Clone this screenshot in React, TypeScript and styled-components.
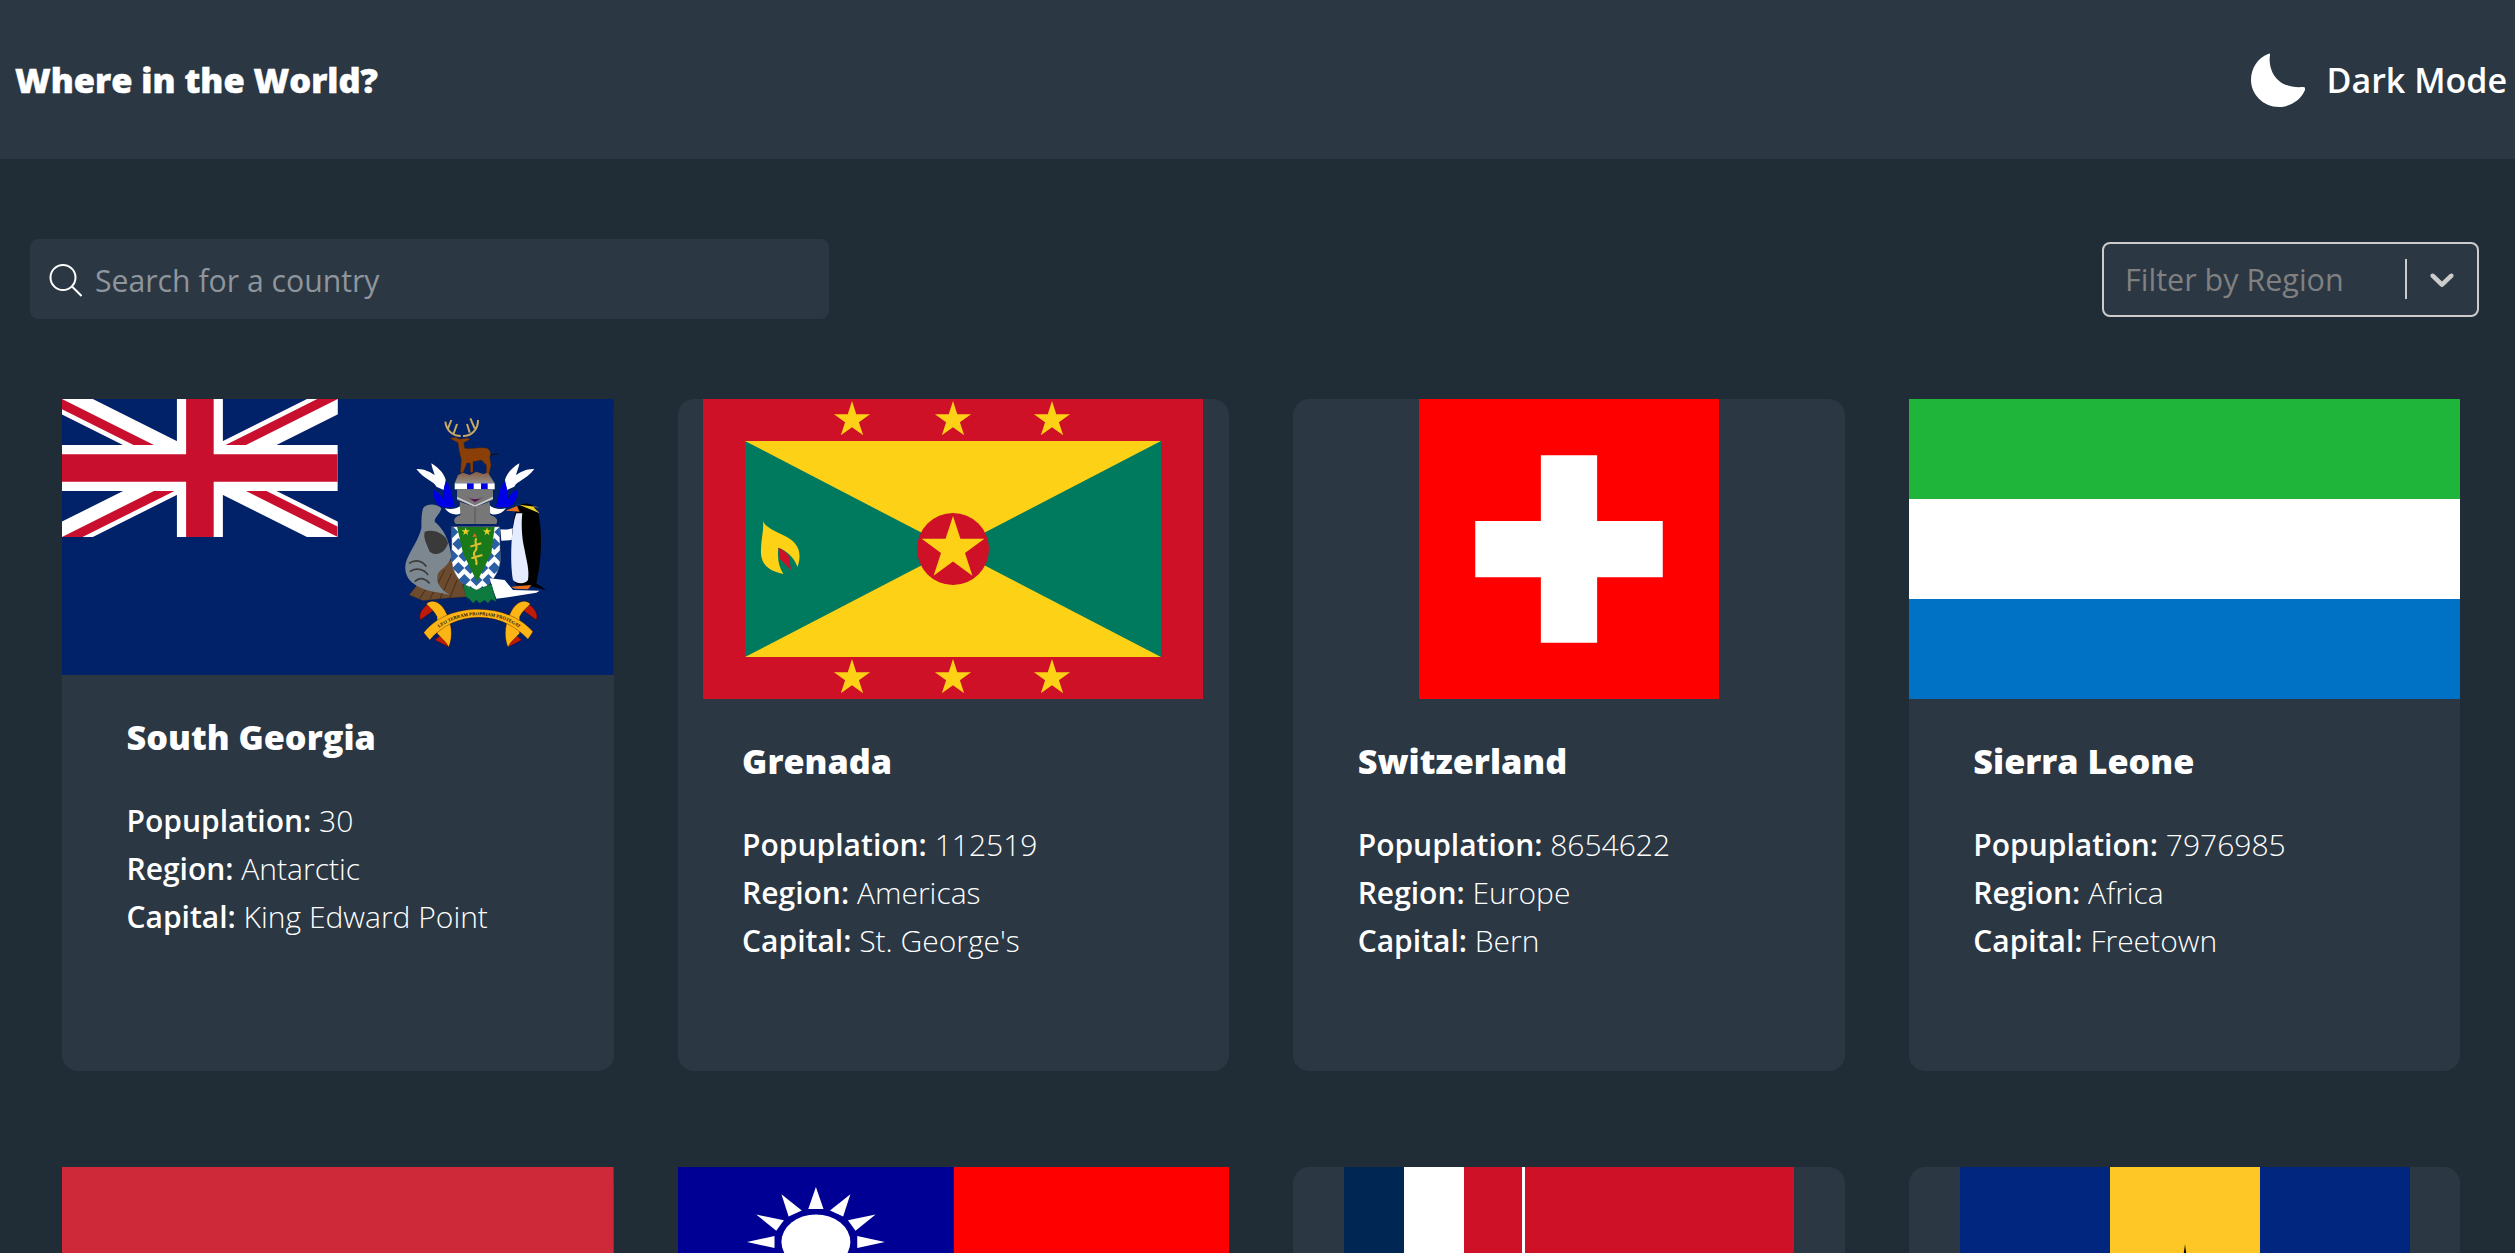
import styled, { createGlobalStyle } from 'styled-components';

const WIDE_FLAG = 551.6;

const GlobalStyle = createGlobalStyle`
  html, body {
    margin: 0;
    padding: 0;
    height: 100%;
    overflow: hidden;
    background-color: #202c36;
  }
  * {
    box-sizing: border-box;
  }
`;

const Page = styled.div`
  height: 100vh;
  overflow: hidden;
  color: #fff;
  font-family: 'Open Sans', 'Noto Sans', sans-serif;
`;

const Header = styled.header`
  height: 159px;
  padding: 0 8px 0 15px;
  display: flex;
  align-items: center;
  justify-content: space-between;
  background-color: #2b3743;
`;

const Title = styled.h1`
  margin: 0;
  font-size: 34.4px;
  font-weight: 800;
  -webkit-text-stroke: 0.5px #fff;
`;

const ModeToggle = styled.div`
  display: flex;
  align-items: center;
  gap: 22px;
  font-size: 34px;
  font-weight: 600;
`;

const Toolbar = styled.div`
  padding: 80px 36px 80px 30px;
  display: flex;
  align-items: center;
  justify-content: space-between;
`;

const SearchBox = styled.label`
  width: 799px;
  height: 80px;
  padding: 2px 19px 0;
  display: flex;
  align-items: center;
  gap: 13px;
  background-color: #2b3743;
  border-radius: 8px;
`;

const SearchInput = styled.input`
  flex: 1;
  border: 0;
  outline: 0;
  padding: 0;
  background: transparent;
  color: #fff;
  font-family: inherit;
  font-size: 30.2px;
  font-weight: 400;

  &::placeholder {
    color: #8f959b;
    opacity: 1;
  }
`;

const FilterBox = styled.div`
  width: 377px;
  height: 75px;
  padding-left: 21px;
  display: flex;
  align-items: center;
  background-color: #2b3743;
  border: 2px solid #ccc;
  border-radius: 8px;
`;

const FilterLabel = styled.span`
  flex: 1;
  color: #808080;
  font-size: 30.5px;
`;

const FilterDivider = styled.span`
  width: 2px;
  height: 40px;
  background-color: #ccc;
`;

const FilterArrow = styled.span`
  width: 70px;
  display: flex;
  align-items: center;
  justify-content: center;
  color: #ccc;
`;

const Grid = styled.main`
  padding: 0 0 0 62px;
  display: grid;
  grid-template-columns: repeat(4, ${WIDE_FLAG}px);
  column-gap: 64px;
  row-gap: 96px;
`;

const Card = styled.article`
  height: 672px;
  background-color: #2b3743;
  border-radius: 16px;
`;

const FlagFrame = styled.div`
  display: flex;
  justify-content: center;
`;

const FlagSvg = styled.svg<{ $width: number; $height: number }>`
  display: block;
  width: ${(props) => props.$width}px;
  height: ${(props) => props.$height}px;
`;

const CardBody = styled.div`
  padding: 38px 40px 0 64.5px;
`;

const CountryName = styled.h2`
  margin: 0 0 36px;
  font-size: 34.2px;
  line-height: 48px;
  font-weight: 800;
`;

const Fact = styled.p`
  margin: 0;
  font-size: 30px;
  line-height: 48px;
  font-weight: 300;
`;

const FactLabel = styled.span`
  font-weight: 600;
`;

function star(cx: number, cy: number, r: number) {
  const points = [];
  for (let i = 0; i < 10; i++) {
    const radius = i % 2 === 0 ? r : r * 0.382;
    const angle = (Math.PI / 5) * i - Math.PI / 2;
    points.push(`${cx + radius * Math.cos(angle)},${cy + radius * Math.sin(angle)}`);
  }
  return points.join(' ');
}

function SouthGeorgiaCrest() {
  const lozenges = [];
  for (let row = 0; row < 6; row++) {
    for (let col = 0; col < 5; col++) {
      const x = 218 + col * 36 + (row % 2) * 18;
      const y = 396 + row * 36;
      lozenges.push(`M${x} ${y - 18}L${x + 18} ${y}L${x} ${y + 18}L${x - 18} ${y}Z`);
    }
  }

  return (
    <g transform="translate(318 1) scale(0.3333)">
      <defs>
        <linearGradient id="rock" x1="0" y1="0" x2="0" y2="1">
          <stop offset="0" stopColor="#8a5a3c" />
          <stop offset="1" stopColor="#8f8f8f" />
        </linearGradient>
        <clipPath id="shieldClip">
          <path d="M216 380L360 380L362 480C360 530 320 560 290 590C255 560 218 530 216 480Z" />
        </clipPath>
      </defs>

      <path
        d="M243 108C222 108 200 95 197 65M205 85L215 60M222 100L232 72M250 108C275 108 295 90 295 60M285 85L272 55M270 98L262 72"
        fill="none"
        stroke="#c8a961"
        strokeWidth="6"
      />
      <path d="M330 165L356 162" stroke="#111" strokeWidth="3" />
      <path
        d="M210 115L228 112L240 118L262 114L272 118L252 128L255 145C275 148 305 140 322 145C332 150 335 160 330 172L334 195L328 222L320 222L320 195L305 180L280 185L280 215L272 218L272 190L262 188L250 218L242 218L245 180L238 150L235 128Z"
        fill="#8a3f06"
        stroke="#4a2000"
      />
      <path d="M225 250L235 225L250 218L270 225L290 215L310 222L325 218L345 250Z" fill="url(#rock)" />

      {[0, 1].map((side) => (
        <g key={side} transform={side ? 'translate(574 0) scale(-1 1)' : undefined}>
          <path
            d="M110 207C130 205 150 215 165 225C158 205 155 195 155 190C180 205 195 225 198 240L192 270L170 260C165 245 135 240 110 207Z"
            fill="#fff"
          />
          <path
            d="M200 245C215 260 215 285 222 305L225 320L190 322C170 318 158 290 162 270C175 275 185 285 188 298C192 280 190 260 200 245Z"
            fill="#0000e6"
          />
          <path d="M195 325C215 330 235 325 245 315L248 335C235 350 210 345 195 325Z" fill="#fff" />
        </g>
      ))}

      <rect x="225" y="250" width="120" height="18" fill="#fff" />
      <rect x="262" y="250" width="20" height="18" fill="#0000e6" />
      <rect x="304" y="250" width="20" height="18" fill="#0000e6" />
      <path d="M232 268L340 268L340 300L286 318L232 300Z" fill="#777" />
      <path d="M262 290Q286 305 312 290L286 306Z" fill="#5a0a50" />
      <path d="M232 290L286 316L340 290L340 296L286 322L232 296Z" fill="#ccc" />
      <path
        d="M240 305L286 320L330 305L332 345C345 350 358 355 350 372L228 372C218 360 225 350 242 345Z"
        fill="#777"
      />
      <path d="M286 320L286 372" stroke="#444" strokeWidth="2" />

      <path d="M88 585L140 520L215 480L265 590L200 595L130 602Z" fill="#6b4a2e" stroke="#2e2013" />
      <path
        d="M120 595L170 520M150 598L195 510M180 598L215 520M210 595L232 540"
        stroke="#2e2013"
        strokeWidth="2"
      />
      <path
        d="M130 325C140 310 170 310 185 325C180 345 165 350 165 365C190 385 210 420 215 470C205 500 185 505 175 520C170 540 170 560 210 585C170 575 130 575 100 550C75 530 70 500 85 470C100 440 115 420 125 385C125 360 125 340 130 325Z"
        fill="#7d8790"
      />
      <path d="M135 395C160 385 200 400 205 430C195 460 170 470 150 455C140 430 130 415 135 395Z" fill="#3a3a3a" />
      <path
        d="M88 490C110 475 130 485 140 500M90 515C110 500 135 510 145 525M105 545C120 530 135 535 150 550"
        fill="none"
        stroke="#3a3a3a"
        strokeWidth="5"
      />

      <path d="M362 388C375 390 390 388 400 385L398 420L365 422Z" fill="#fff" />
      <path d="M216 380L360 380L362 480C360 530 320 560 290 590C255 560 218 530 216 480Z" fill="#fff" />
      <g clipPath="url(#shieldClip)">
        <path d={lozenges.join('')} fill="#2a5fa5" />
        <path d="M232 380L345 380L335 460L292 545L250 460Z" fill="#1a7a1a" />
        <polygon points={star(258, 395, 13)} fill="#e8d028" />
        <polygon points={star(322, 395, 13)} fill="#e8d028" />
        <path d="M285 400L292 410L278 410Z" fill="#e06a1e" />
        <path
          d="M290 415C280 430 300 440 285 455C275 465 295 475 290 495M272 440L305 430M275 475L308 465"
          fill="none"
          stroke="#e0c030"
          strokeWidth="6"
        />
      </g>
      <path
        d="M216 380L360 380L362 480C360 530 320 560 290 590C255 560 218 530 216 480Z"
        fill="none"
        stroke="#39424a"
        strokeWidth="1.5"
      />

      <path d="M330 535L375 540L400 570L480 572L470 578L385 592L350 596L340 570Z" fill="#fff" />
      <path
        d="M250 552L290 570L335 552L350 605L335 598L325 610L315 600L300 610L290 600L280 610L270 598L258 590Z"
        fill="#0f7a3f"
        stroke="#0a4a25"
      />

      <path
        d="M415 320C440 300 475 310 480 360C490 430 480 510 470 550L500 570L460 560L410 555C395 520 392 440 400 380C402 355 405 335 415 320Z"
        fill="#000"
      />
      <path
        d="M410 340C395 380 390 480 400 540C415 555 440 550 445 540C450 510 440 480 435 450C425 410 425 365 428 340Z"
        fill="#e6ecff"
      />
      <path d="M378 332L412 318L420 335Z" fill="#e8701a" />
      <path d="M418 314L480 340L462 322L480 322Z" fill="#e8d028" />
      <path d="M395 560L455 555L445 568L405 566Z" fill="#e8701a" />

      {[0, 1].map((side) => (
        <g key={side} transform={side ? 'translate(592 0) scale(-1 1)' : undefined}>
          <path d="M148 610C125 625 115 645 122 660L150 640L165 628Z" fill="#c01a0a" stroke="#200" />
          <path d="M165 720L205 740L210 700L195 695Z" fill="#c01a0a" stroke="#200" />
          <path
            d="M140 612C155 595 180 605 195 630C215 665 222 705 207 742C200 725 185 715 172 700L172 650C165 635 150 622 140 612Z"
            fill="#fdb515"
            stroke="#200"
          />
        </g>
      ))}
      <path
        d="M132 698C170 650 230 628 296 628C360 628 420 650 460 695L445 718C410 680 360 652 296 652C235 652 185 680 150 720Z"
        fill="#fdb515"
        stroke="#200"
      />
      <path id="mottoLine" d="M146 712C185 668 240 646 296 646C355 646 410 668 452 712" fill="none" />
      <text fontFamily="'Liberation Serif', serif" fontSize="14" fontWeight="700" fill="#111">
        <textPath href="#mottoLine" startOffset="50%" textAnchor="middle">
          LEO TERRAM PROPRIAM PROTEGAT
        </textPath>
      </text>
    </g>
  );
}

function SouthGeorgiaFlag() {
  return (
    <FlagSvg $width={WIDE_FLAG} $height={276} viewBox="0 0 552 276" preserveAspectRatio="none">
      <rect width="552" height="276" fill="#012169" />
      <svg x="0" y="0" width="276" height="138" viewBox="0 0 60 30">
        <clipPath id="jackClip">
          <path d="M30 15h30v15zv15h-30zh-30v-15zv-15h30z" />
        </clipPath>
        <path d="M0 0L60 30M60 0L0 30" stroke="#fff" strokeWidth="6" />
        <path d="M0 0L60 30M60 0L0 30" clipPath="url(#jackClip)" stroke="#c8102e" strokeWidth="4" />
        <path d="M30 0v30M0 15h60" stroke="#fff" strokeWidth="10" />
        <path d="M30 0v30M0 15h60" stroke="#c8102e" strokeWidth="6" />
      </svg>
      <SouthGeorgiaCrest />
    </FlagSvg>
  );
}

function GrenadaFlag() {
  return (
    <FlagSvg $width={500} $height={300} viewBox="0 0 500 300">
      <rect width="500" height="300" fill="#ce1126" />
      <rect x="42" y="42" width="416" height="216" fill="#007a5e" />
      <path d="M42 42H458L42 258H458Z" fill="#fcd116" />
      <ellipse cx="250" cy="150" rx="36" ry="36" fill="#ce1126" />
      <polygon points={star(250, 150, 33)} fill="#fcd116" />
      {[149, 250, 349].map((x) => (
        <g key={x}>
          <polygon points={star(x, 21, 19)} fill="#fcd116" />
          <polygon points={star(x, 279, 19)} fill="#fcd116" />
        </g>
      ))}
      <path
        d="M60 122C62 128 72 132 82 137C94 143 100 152 94.5 168C91 158 84 152 75.4 148.7C74 160 76 168 80.4 175C65 172 57 165 58 150C58 140 61 132 60 122Z"
        fill="#fcd116"
      />
      <path d="M75.4 148.7C82 152 86 156 86 158L88 171L77 160Z" fill="#ce1126" />
    </FlagSvg>
  );
}

function SwitzerlandFlag() {
  return (
    <FlagSvg $width={300} $height={300} viewBox="0 0 32 32">
      <rect width="32" height="32" fill="#f00" />
      <path d="M13 6h6v7h7v6h-7v7h-6v-7h-7v-6h7z" fill="#fff" />
    </FlagSvg>
  );
}

function SierraLeoneFlag() {
  return (
    <FlagSvg $width={WIDE_FLAG} $height={300} viewBox="0 0 3 3" preserveAspectRatio="none">
      <rect width="3" height="1" fill="#1eb53a" />
      <rect y="1" width="3" height="1" fill="#fff" />
      <rect y="2" width="3" height="1" fill="#0072c6" />
    </FlagSvg>
  );
}

function RedFlag() {
  return (
    <FlagSvg $width={WIDE_FLAG} $height={300} viewBox="0 0 552 300" preserveAspectRatio="none">
      <rect width="552" height="300" fill="#ce2939" />
    </FlagSvg>
  );
}

function TaiwanFlag() {
  const rays = Array.from({ length: 12 }, (_, i) => i * 30);

  return (
    <FlagSvg $width={WIDE_FLAG} $height={300} viewBox="0 0 552 300" preserveAspectRatio="none">
      <rect width="552" height="300" fill="#fe0000" />
      <rect width="276" height="150" fill="#000095" />
      <g transform="translate(138 75) scale(69 55)">
        {rays.map((deg) => (
          <polygon key={deg} transform={`rotate(${deg})`} points="0,-1 0.11,-0.6 -0.11,-0.6" fill="#fff" />
        ))}
        <circle r="0.565" fill="#000095" />
        <circle r="0.5" fill="#fff" />
      </g>
    </FlagSvg>
  );
}

function StripedFlag() {
  return (
    <FlagSvg $width={450} $height={300} viewBox="0 0 450 300">
      <rect width="450" height="300" fill="#ce1126" />
      <rect width="60" height="300" fill="#002654" />
      <rect x="60" width="60" height="300" fill="#fff" />
      <rect x="178" width="3" height="300" fill="#fff" />
    </FlagSvg>
  );
}

function BarbadosFlag() {
  return (
    <FlagSvg $width={450} $height={300} viewBox="0 0 450 300">
      <rect width="450" height="300" fill="#00267f" />
      <rect x="150" width="150" height="300" fill="#ffc726" />
      <path d="M225 77C227 95 232 115 238 130L232 200H218L212 130C218 115 223 95 225 77Z" fill="#000" />
    </FlagSvg>
  );
}

const countries = [
  {
    name: 'South Georgia',
    population: '30',
    region: 'Antarctic',
    capital: 'King Edward Point',
    Flag: SouthGeorgiaFlag,
  },
  { name: 'Grenada', population: '112519', region: 'Americas', capital: "St. George's", Flag: GrenadaFlag },
  { name: 'Switzerland', population: '8654622', region: 'Europe', capital: 'Bern', Flag: SwitzerlandFlag },
  { name: 'Sierra Leone', population: '7976985', region: 'Africa', capital: 'Freetown', Flag: SierraLeoneFlag },
  { Flag: RedFlag },
  { Flag: TaiwanFlag },
  { Flag: StripedFlag },
  { Flag: BarbadosFlag },
];

export default function App() {
  return (
    <Page>
      <GlobalStyle />
      <Header>
        <Title>Where in the World?</Title>
        <ModeToggle>
          <svg width="54" height="54" viewBox="0 0 54 54" fill="#fff">
            <path d="M17 1Q19.5-.5 19 2C17 14 23 36 52 34Q55 34 54 37C50 47 39 54 28 54C12 54 0 41 0 27C0 15 7 5 17 1Z" />
          </svg>
          Dark Mode
        </ModeToggle>
      </Header>
      <Toolbar>
        <SearchBox>
          <svg width="33" height="33" viewBox="0 0 33 33" fill="none" stroke="#fff" strokeWidth="2">
            <circle cx="14" cy="13.5" r="12.5" />
            <path d="M23 22.5L32.5 32" />
          </svg>
          <SearchInput placeholder="Search for a country" />
        </SearchBox>
        <FilterBox>
          <FilterLabel>Filter by Region</FilterLabel>
          <FilterDivider />
          <FilterArrow>
            <svg width="40" height="40" viewBox="0 0 20 20" fill="currentColor">
              <path d="M4.516 7.548c.436-.446 1.043-.481 1.576 0L10 11.295l3.908-3.747c.533-.481 1.141-.446 1.574 0 .436.445.408 1.197 0 1.615-.406.418-4.695 4.502-4.695 4.502a1.095 1.095 0 0 1-1.576 0S4.924 9.581 4.516 9.163c-.409-.418-.436-1.17 0-1.615z" />
            </svg>
          </FilterArrow>
        </FilterBox>
      </Toolbar>
      <Grid>
        {countries.map(({ Flag, name, population, region, capital }, index) => (
          <Card key={name ?? index}>
            <FlagFrame>
              <Flag />
            </FlagFrame>
            {name && (
              <CardBody>
                <CountryName>{name}</CountryName>
                <Fact>
                  <FactLabel>Popuplation:</FactLabel> {population}
                </Fact>
                <Fact>
                  <FactLabel>Region:</FactLabel> {region}
                </Fact>
                <Fact>
                  <FactLabel>Capital:</FactLabel> {capital}
                </Fact>
              </CardBody>
            )}
          </Card>
        ))}
      </Grid>
    </Page>
  );
}
